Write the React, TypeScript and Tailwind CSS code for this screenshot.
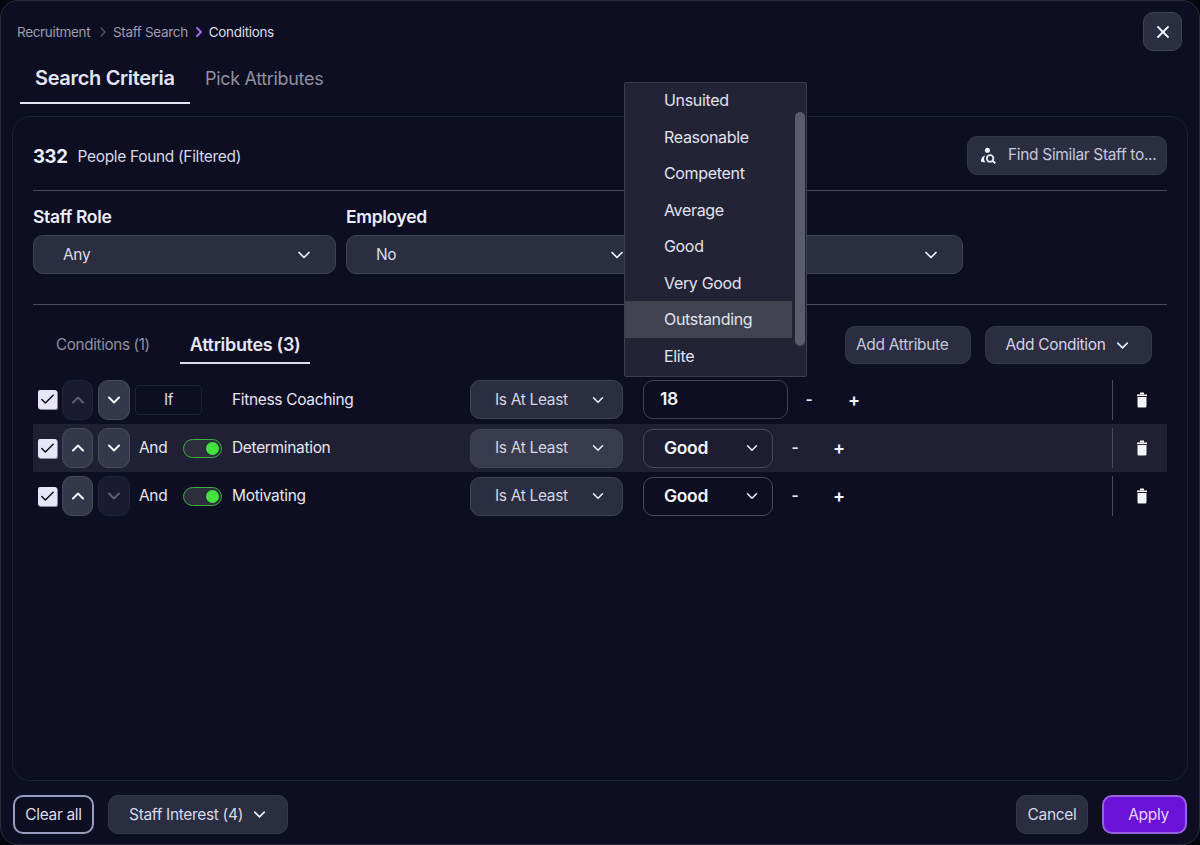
import { Check, ChevronDown, ChevronRight, ChevronUp, X } from 'lucide-react';

const levels = ['Unsuited', 'Reasonable', 'Competent', 'Average', 'Good', 'Very Good', 'Outstanding', 'Elite'];

function Trash() {
  return (
    <svg width="14" height="16" viewBox="0 0 14 16" fill="#f4f4fb">
      <rect x="5" y="0.5" width="4" height="2" />
      <rect x="2" y="2.5" width="10" height="1.6" />
      <path d="M2.5 5h9v9.2a1.2 1.2 0 0 1-1.2 1.2H3.7a1.2 1.2 0 0 1-1.2-1.2z" />
    </svg>
  );
}

function StaffSearchIcon() {
  return (
    <svg width="17" height="17" viewBox="0 0 16 16" fill="#eeeef8">
      <circle cx="7" cy="3" r="2.4" />
      <path d="M0.8 13.5c0-3 1.7-5.2 4.4-5.8-.9 1-1.4 2.2-1.4 3.4 0 1.3.5 2.4 1.5 3.2-1.6.4-3.4 0-4.5-.8z" />
      <circle cx="9.5" cy="10.8" r="3.1" fill="none" stroke="#eeeef8" strokeWidth="1.6" />
      <path d="M11.8 13l2.6 2.2" stroke="#eeeef8" strokeWidth="1.8" fill="none" />
    </svg>
  );
}

function SelectBox({ label, value, className }: { label?: string; value?: string; className: string }) {
  return (
    <div className={className}>
      <div className="h-[21px] text-[17.5px] leading-[21px] font-semibold text-[#ecedf8]">{label}</div>
      <div className="mt-[8px] flex h-[39px] items-center justify-between rounded-[10px] border border-[#414354] bg-[#2b2d41] pl-[29px] pr-[21px] text-[15.5px] text-[#dcdcec]">
        <span>{value}</span>
        <ChevronDown size={20} color="#f0f0f8" strokeWidth={2} />
      </div>
    </div>
  );
}

function Arrow({ up, on }: { up?: boolean; on: boolean }) {
  const Icon = up ? ChevronUp : ChevronDown;
  return (
    <div className={`flex h-[40px] items-center justify-center rounded-[10px] border ${up ? 'w-[31px]' : 'w-[32px]'} ${on ? 'border-[#494b5c] bg-[#35374a]' : 'border-[#23253a] bg-[#1a1b30]'}`}>
      <Icon size={20} strokeWidth={2.4} color={on ? '#f4f4fb' : '#5e6070'} />
    </div>
  );
}

function Row({ first, last, name, hovered, value }: { first?: boolean; last?: boolean; name: string; hovered?: boolean; value: string }) {
  return (
    <div className={`flex h-[48px] items-center text-[15.5px] text-[#e6e6f3] ${hovered ? 'bg-[#1f2033]' : ''} ${first ? 'pb-px' : ''}`}>
      <div className="ml-[5px] flex h-[19px] w-[19px] items-center justify-center rounded-[2px] bg-[#e6e6f8] shadow-[1px_1px_0_#8a8ba0]">
        <Check size={17} color="#0a0a14" strokeWidth={2} />
      </div>
      <div className="ml-[5px]"><Arrow up on={!first} /></div>
      <div className="ml-[5px]"><Arrow on={!last} /></div>
      {first ? (
        <div className="ml-[5px] flex h-[30px] w-[67px] items-center justify-center rounded-[4px] border border-[#1f2135] text-[#d8d8e8]">If</div>
      ) : (
        <div className="flex w-[102px] items-center">
          <span className="ml-[9px] w-[44px]">And</span>
          <div className="flex h-[19px] w-[39px] items-center justify-end rounded-full border border-[#3fae3f] bg-[#2c2e3d] pr-[2px]">
            <div className="h-[13px] w-[13px] rounded-full bg-[#45e33f]" />
          </div>
        </div>
      )}
      <div className={`${first ? 'ml-[30px]' : 'ml-0'} w-[238px]`}>{name}</div>
      <div className={`flex h-[39px] w-[153px] items-center justify-between rounded-[10px] border border-[#414354] pl-[24px] pr-[15px] text-[#d4d4e4] ${hovered ? 'bg-[#383a4d]' : 'bg-[#2b2d41]'}`}>
        <span>Is At Least</span>
        <ChevronDown size={18} color="#f0f0f8" strokeWidth={2} />
      </div>
      {first ? (
        <div className="ml-[20px] flex h-[39px] w-[145px] items-center rounded-[10px] border border-[#414354] bg-[#0d0e22] pl-[16px] text-[17.5px] font-semibold text-[#f4f4fb]">{value}</div>
      ) : (
        <div className={`ml-[20px] flex h-[39px] w-[130px] items-center justify-between rounded-[10px] border border-[#484a5b] pl-[20px] pr-[11px] text-[17.5px] font-semibold text-[#f4f4fb] ${hovered ? 'bg-[#1c1d30]' : 'bg-[#0d0e22]'}`}>
          <span>{value}</span>
          <ChevronDown size={18} color="#f0f0f8" strokeWidth={2} />
        </div>
      )}
      <span className={`${first ? 'ml-[17px]' : 'ml-[18px]'} w-[8px] text-center font-semibold`}>-</span>
      <span className={`${first ? 'ml-[34px]' : 'ml-[33px]'} w-[14px] text-center text-[18px] leading-none font-semibold text-[#f4f4fb]`}>+</span>
      <div className="flex-1" />
      <div className="h-[40px] w-px bg-[#4a4c5c]" />
      <div className="flex w-[54px] justify-center pl-[4px]"><Trash /></div>
    </div>
  );
}

export default function App() {
  return (
    <div className="h-[845px] w-[1200px] overflow-hidden bg-[#07080f] font-[Inter,sans-serif] tracking-[-0.33px]">
      <div className="relative flex h-[845px] flex-col rounded-[18px] border border-[#2a2c3c] bg-[#0d0e22] px-[11px]">
        {/* cabecera */}
        <div className="flex h-[59px] items-start justify-between">
          <div className="mt-[22px] ml-[5px] flex items-center text-[13.5px] leading-[18px] text-[#9c9db0]">
            <span className="w-[76px]">Recruitment</span>
            <ChevronRight size={16} color="#55576a" className="mx-[2px]" />
            <span>Staff Search</span>
            <ChevronRight size={16} color="#a06ee8" strokeWidth={3} className="mr-[2px] ml-[3px]" />
            <span className="text-[#dcdcec]">Conditions</span>
          </div>
          <div className="mt-[11px] mr-[6px] flex h-[39px] w-[39px] items-center justify-center rounded-[10px] border border-[#414354] bg-[#2b2d41]">
            <X size={20} color="#f4f4fb" strokeWidth={2.2} />
          </div>
        </div>

        <div className="ml-[8px] flex h-[44px] items-start">
          <div className="h-[44px] w-[170px] border-b-2 border-[#e6e6f5] pl-[15px] text-[20px] leading-[36px] font-semibold text-[#e4e4f4]">Search Criteria</div>
          <div className="ml-[15px] pt-px text-[18px] leading-[36px] text-[#90919f]">Pick Attributes</div>
        </div>

        {/* panel principal */}
        <div className="mt-[12px] flex h-[665px] flex-col rounded-[18px] border border-[#1e2034] px-[20px] pt-[18px]">
          <div className="flex h-[40px] items-center justify-between">
            <div className="flex items-center pt-[3px]">
              <span className="text-[18.5px] font-bold text-[#f0f0fa]">332</span>
              <span className="ml-[10px] text-[15.5px] text-[#d8d8e8]">People Found (Filtered)</span>
            </div>
            <div className="flex h-[39px] w-[200px] items-center rounded-[10px] border border-[#35374a] bg-[#2b2d41] pl-[12px] text-[15.5px] text-[#c8c8dc]">
              <StaffSearchIcon />
              <span className="ml-[11px] whitespace-nowrap">Find Similar Staff to...</span>
            </div>
          </div>
          <div className="mt-[15px] h-px bg-[#4a4c5c]" />
          <div className="mt-[15px] flex gap-[10px]">
            <SelectBox label="Staff Role" value="Any" className="w-[303px]" />
            <SelectBox label="Employed" value="No" className="w-[303px]" />
            <SelectBox className="w-[304px]" />
          </div>
          <div className="mt-[30px] h-px bg-[#4a4c5c]" />

          <div className="mt-[21px] flex h-[38px] items-start justify-between">
            <div className="flex">
              <div className="ml-[23px] text-[15.2px] leading-[38px] text-[#8f90a2]">Conditions (1)</div>
              <div className="ml-[30px] h-[38px] border-b-2 border-[#dcdcf0] px-[10px] text-[18px] leading-[38px] font-semibold text-[#e6e6f5]">Attributes (3)</div>
            </div>
            <div className="mr-[15px] flex gap-[14px]">
              <div className="flex h-[38px] w-[126px] items-center rounded-[10px] border border-[#35374a] bg-[#2b2d41] pl-[10px] text-[15.5px] text-[#c8c8dc]">Add Attribute</div>
              <div className="flex h-[38px] w-[167px] items-center justify-center gap-[7px] rounded-[10px] border border-[#35374a] bg-[#2b2d41] text-[15.5px] text-[#d4d4e4]">
                Add Condition
                <ChevronDown size={19} color="#f0f0f8" strokeWidth={2} />
              </div>
            </div>
          </div>

          <div className="mt-[12px]">
            <Row first name="Fitness Coaching" value="18" />
            <Row hovered name="Determination" value="Good" />
            <Row last name="Motivating" value="Good" />
          </div>
        </div>

        {/* pie */}
        <div className="mt-[14px] flex items-center justify-between pr-[1px] pl-[1px] text-[15.5px]">
          <div className="flex items-center gap-[14px]">
            <div className="flex h-[39px] w-[81px] items-center justify-center rounded-[10px] border-2 border-[#9b9bbd] text-[#dcdcec]">Clear all</div>
            <div className="flex h-[39px] w-[180px] items-center justify-center gap-[7px] rounded-[10px] border border-[#35374a] bg-[#2b2d41] pl-[2px] text-[#d8d8e8]">
              Staff Interest (4)
              <ChevronDown size={19} color="#f0f0f8" strokeWidth={2} />
            </div>
          </div>
          <div className="flex items-center gap-[14px]">
            <div className="flex h-[39px] w-[72px] items-center justify-center rounded-[10px] border border-[#35374a] bg-[#2b2d41] text-[#d8d8e8]">Cancel</div>
            <div className="flex h-[39px] w-[85px] items-center justify-center rounded-[10px] border-2 border-[#9a62e0] bg-[#6a12d8] pl-[8px] text-[#e6d4fb]">Apply</div>
          </div>
        </div>

        {/* desplegable abierto */}
        <div className="absolute top-[81px] left-[623px] h-[295px] w-[183px] overflow-hidden rounded-[2px] border border-[#3c3e4e] bg-[#222436]">
          <div className="-mt-px w-[167px]">
            {levels.map((level) => (
              <div key={level} className={`flex h-[36.5px] items-center pl-[39px] text-[16px] text-[#e2e2f0] ${level === 'Outstanding' ? 'bg-[#40424f]' : ''}`}>{level}</div>
            ))}
          </div>
          <div className="absolute top-[29px] right-[1px] h-[234px] w-[10px] rounded-full bg-[#5a5b6b]" />
        </div>
      </div>
    </div>
  );
}
